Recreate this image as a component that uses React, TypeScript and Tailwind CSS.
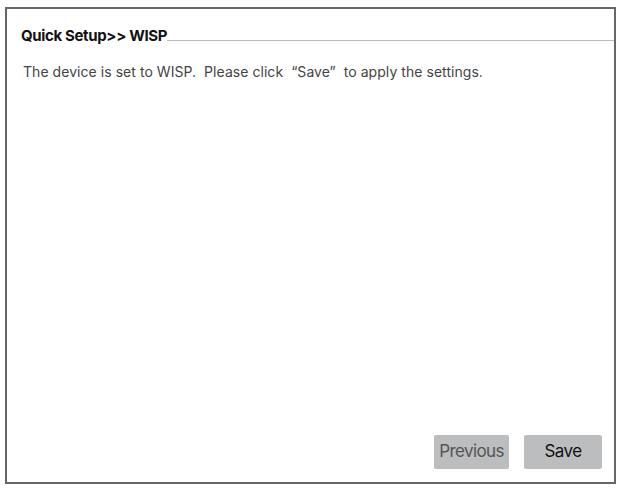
import React from 'react';

const App: React.FC = () => {
  return (
    <div className="w-[624px] h-[490px] bg-white pt-[7px] pl-[5px]" style={{ fontFamily: 'Inter, "Liberation Sans", Arial, sans-serif' }}>
      <div className="w-[611px] h-[477px] border-2 border-[#666666] flex flex-col">
        {/* Title with rule */}
        <div className="flex items-end pt-[18px] pl-[14px]">
          <span className="text-[15px] leading-[17px] font-bold text-[#111] tracking-[-0.35px]">Quick Setup&gt;&gt; WISP</span>
          <div className="flex-1 border-b border-[#bbbbbb] mb-[3px]" />
        </div>

        {/* Message */}
        <p className="mt-[18px] pl-[16px] text-[14px] leading-[20px] text-[#444] tracking-[0.05px]">
          The device is set to WISP.&nbsp; Please click &nbsp;“Save”&nbsp; to apply the settings.
        </p>

        <div className="flex-1" />

        {/* Buttons */}
        <div className="flex justify-end gap-[15px] pr-[12px] pb-[13px]">
          <button className="w-[75px] h-[34px] rounded-[2px] bg-[#bcbdbf] text-[17px] text-[#555] tracking-[-0.6px]">
            Previous
          </button>
          <button className="w-[78px] h-[34px] rounded-[2px] bg-[#bcbdbf] text-[17px] text-[#111] tracking-[-0.6px]">
            Save
          </button>
        </div>
      </div>
    </div>
  );
};

export default App;
